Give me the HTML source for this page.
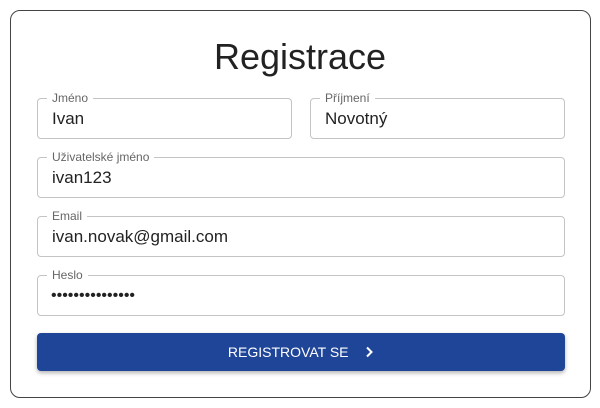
<!DOCTYPE html>
<html><head><meta charset="utf-8"><style>
*{box-sizing:border-box;margin:0;padding:0}
body{width:600px;height:408px;background:#fff;font-family:"Liberation Sans",sans-serif;position:relative;overflow:hidden}
.card{position:absolute;left:10px;top:10px;width:581px;height:388px;border:1.5px solid #444;border-radius:10px}
h1{position:absolute;left:0;width:600px;top:36px;text-align:center;font-weight:400;font-size:36px;color:#222}
.f{position:absolute;height:41px;border:1px solid #c4c4c4;border-radius:4px}
.f label{position:absolute;left:9px;top:-8px;background:#fff;padding:0 5px;font-size:12px;color:#666;line-height:14px}
.f span{position:absolute;left:14px;top:10px;font-size:17px;color:#222;line-height:20px}
.btn{position:absolute;left:37px;top:333px;width:528px;height:38px;background:#1f4599;border-radius:4px;box-shadow:0 2px 4px rgba(0,0,0,.3);color:#fff;font-size:14px;text-align:center;line-height:38px;letter-spacing:0}
</style></head><body>
<div class="card"></div>
<h1>Registrace</h1>
<div class="f" style="left:37px;top:98px;width:255px"><label>Jméno</label><span>Ivan</span></div>
<div class="f" style="left:310px;top:98px;width:255px"><label>Příjmení</label><span>Novotný</span></div>
<div class="f" style="left:37px;top:157px;width:528px"><label>Uživatelské jméno</label><span>ivan123</span></div>
<div class="f" style="left:37px;top:216px;width:528px"><label>Email</label><span>ivan.novak@gmail.com</span></div>
<div class="f" style="left:37px;top:275px;width:528px"><label>Heslo</label><span style="font-size:16px;letter-spacing:0;left:13px">•••••••••••••••</span></div>
<div class="btn">REGISTROVAT SE &nbsp;&nbsp;&nbsp;<svg width="10" height="12" viewBox="0 0 10 12" style="vertical-align:-1px"><path d="M3 1.5l4.5 4.5-4.5 4.5" fill="none" stroke="#fff" stroke-width="2"/></svg></div>
</body></html>
